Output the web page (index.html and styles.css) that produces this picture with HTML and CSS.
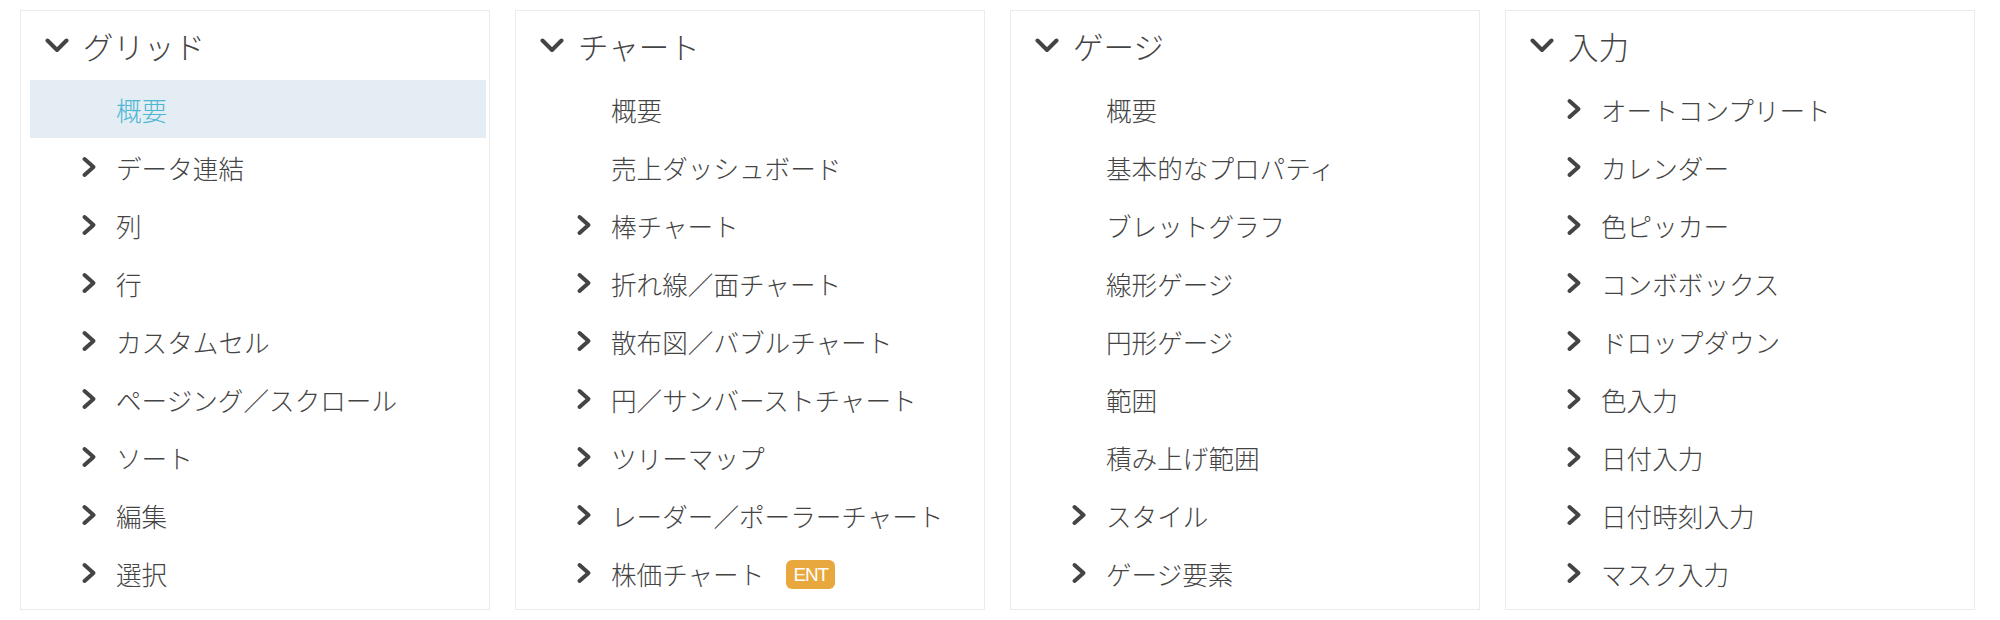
FILE: index.html
```html
<!DOCTYPE html>
<html lang="ja">
<head>
<meta charset="utf-8">
<title>Samples</title>
<link rel="stylesheet" href="styles.css">
</head>
<body>
<svg width="0" height="0" class="defs">
  <defs>
    <symbol id="chev-r" viewBox="0 0 16 22"><path d="M3.5 3 L12.5 11 L3.5 19" fill="none" stroke="currentColor" stroke-width="4" stroke-linecap="round" stroke-linejoin="round"/></symbol>
    <symbol id="chev-d" viewBox="0 0 24 16"><path d="M2.5 2.5 L12 12 L21.5 2.5" fill="none" stroke="currentColor" stroke-width="4" stroke-linecap="round" stroke-linejoin="round"/></symbol>
  </defs>
</svg>
<main class="row">
  <section class="panel">
    <h2 class="panel-head"><svg class="ico-d"><use href="#chev-d"/></svg><span>グリッド</span></h2>
    <ul class="list">
      <li class="item active"><span class="spacer"></span><span>概要</span></li>
      <li class="item"><svg class="ico-r"><use href="#chev-r"/></svg><span>データ連結</span></li>
      <li class="item"><svg class="ico-r"><use href="#chev-r"/></svg><span>列</span></li>
      <li class="item"><svg class="ico-r"><use href="#chev-r"/></svg><span>行</span></li>
      <li class="item"><svg class="ico-r"><use href="#chev-r"/></svg><span>カスタムセル</span></li>
      <li class="item"><svg class="ico-r"><use href="#chev-r"/></svg><span>ページング／スクロール</span></li>
      <li class="item"><svg class="ico-r"><use href="#chev-r"/></svg><span>ソート</span></li>
      <li class="item"><svg class="ico-r"><use href="#chev-r"/></svg><span>編集</span></li>
      <li class="item"><svg class="ico-r"><use href="#chev-r"/></svg><span>選択</span></li>
    </ul>
  </section>
  <section class="panel">
    <h2 class="panel-head"><svg class="ico-d"><use href="#chev-d"/></svg><span>チャート</span></h2>
    <ul class="list">
      <li class="item"><span class="spacer"></span><span>概要</span></li>
      <li class="item"><span class="spacer"></span><span>売上ダッシュボード</span></li>
      <li class="item"><svg class="ico-r"><use href="#chev-r"/></svg><span>棒チャート</span></li>
      <li class="item"><svg class="ico-r"><use href="#chev-r"/></svg><span>折れ線／面チャート</span></li>
      <li class="item"><svg class="ico-r"><use href="#chev-r"/></svg><span>散布図／バブルチャート</span></li>
      <li class="item"><svg class="ico-r"><use href="#chev-r"/></svg><span>円／サンバーストチャート</span></li>
      <li class="item"><svg class="ico-r"><use href="#chev-r"/></svg><span>ツリーマップ</span></li>
      <li class="item"><svg class="ico-r"><use href="#chev-r"/></svg><span>レーダー／ポーラーチャート</span></li>
      <li class="item"><svg class="ico-r"><use href="#chev-r"/></svg><span>株価チャート</span><span class="badge">ENT</span></li>
    </ul>
  </section>
  <section class="panel">
    <h2 class="panel-head"><svg class="ico-d"><use href="#chev-d"/></svg><span>ゲージ</span></h2>
    <ul class="list">
      <li class="item"><span class="spacer"></span><span>概要</span></li>
      <li class="item"><span class="spacer"></span><span>基本的なプロパティ</span></li>
      <li class="item"><span class="spacer"></span><span>ブレットグラフ</span></li>
      <li class="item"><span class="spacer"></span><span>線形ゲージ</span></li>
      <li class="item"><span class="spacer"></span><span>円形ゲージ</span></li>
      <li class="item"><span class="spacer"></span><span>範囲</span></li>
      <li class="item"><span class="spacer"></span><span>積み上げ範囲</span></li>
      <li class="item"><svg class="ico-r"><use href="#chev-r"/></svg><span>スタイル</span></li>
      <li class="item"><svg class="ico-r"><use href="#chev-r"/></svg><span>ゲージ要素</span></li>
    </ul>
  </section>
  <section class="panel">
    <h2 class="panel-head"><svg class="ico-d"><use href="#chev-d"/></svg><span>入力</span></h2>
    <ul class="list">
      <li class="item"><svg class="ico-r"><use href="#chev-r"/></svg><span>オートコンプリート</span></li>
      <li class="item"><svg class="ico-r"><use href="#chev-r"/></svg><span>カレンダー</span></li>
      <li class="item"><svg class="ico-r"><use href="#chev-r"/></svg><span>色ピッカー</span></li>
      <li class="item"><svg class="ico-r"><use href="#chev-r"/></svg><span>コンボボックス</span></li>
      <li class="item"><svg class="ico-r"><use href="#chev-r"/></svg><span>ドロップダウン</span></li>
      <li class="item"><svg class="ico-r"><use href="#chev-r"/></svg><span>色入力</span></li>
      <li class="item"><svg class="ico-r"><use href="#chev-r"/></svg><span>日付入力</span></li>
      <li class="item"><svg class="ico-r"><use href="#chev-r"/></svg><span>日付時刻入力</span></li>
      <li class="item"><svg class="ico-r"><use href="#chev-r"/></svg><span>マスク入力</span></li>
    </ul>
  </section>
</main>
</body>
</html>
```
FILE: styles.css
```css
html, body {
  margin: 0;
  padding: 0;
  background: #ffffff;
}
body {
  font-family: "Noto Sans CJK JP", "Noto Sans", sans-serif;
  font-weight: 300;
  color: #444444;
}
.defs {
  position: absolute;
  width: 0;
  height: 0;
  overflow: hidden;
}
.row {
  display: flex;
  gap: 25px;
  padding: 10px 25px 10px 20px;
}
.panel {
  box-sizing: border-box;
  width: 470px;
  height: 600px;
  border: 1px solid #ebebeb;
  padding: 0 3px 0 9px;
}
.panel-head {
  display: flex;
  align-items: center;
  height: 69px;
  margin: 0;
  padding-left: 15px;
  font-size: 30.5px;
  font-weight: 300;
  color: #444444;
}
.ico-d {
  width: 24px;
  height: 16px;
  margin-right: 14px;
  margin-top: 1px;
  color: #444444;
}
.list {
  list-style: none;
  margin: 0;
  padding: 0;
}
.item {
  display: flex;
  align-items: center;
  height: 58px;
  padding-left: 51px;
  font-size: 25.6px;
  color: #444444;
}
.ico-r, .spacer {
  width: 16px;
  height: 22px;
  margin-right: 19px;
  flex: none;
  color: #444444;
}
.item.active {
  background: #e5edf4;
  color: #4cb7d3;
}
.badge {
  display: inline-flex;
  align-items: center;
  justify-content: center;
  width: 49px;
  height: 29px;
  margin-left: 22px;
  margin-top: 3px;
  border-radius: 6px;
  background: #e9a83d;
  color: #ffffff;
  font-family: "Liberation Sans", Arial, sans-serif;
  font-weight: 400;
  font-size: 19px;
  letter-spacing: -1.2px;
}
```
